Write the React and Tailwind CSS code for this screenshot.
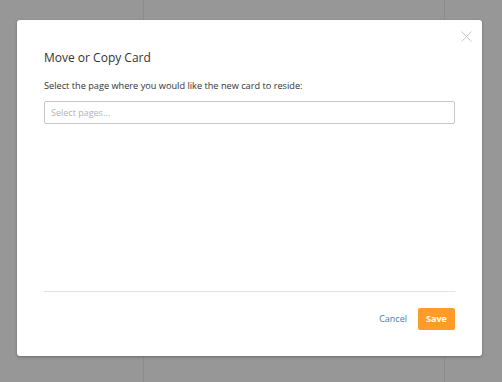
export default function App() {
  return (
    <div className="relative w-[502px] h-[382px] overflow-hidden bg-[#979797]" style={{ fontFamily: '"Open Sans", sans-serif' }}>
      <div className="absolute left-[143px] top-0 bottom-0 w-px bg-[#8c8c8c]" />
      <div className="absolute left-[444px] top-0 bottom-0 w-px bg-[#8c8c8c]" />
      <div className="absolute left-[17px] top-[20px] w-[465px] h-[336px] bg-white rounded-[3px] shadow-[0_1px_3px_rgba(0,0,0,0.3)] flex flex-col pl-[27px] pr-[27px]">
        <button className="absolute right-[10px] top-[11px] w-[11px] h-[11px] text-[#c8c8c8]">
          <svg width="11" height="11" viewBox="0 0 11 11" fill="none" stroke="currentColor" strokeWidth="1">
            <path d="M0.5 0.5 L10.5 10.5 M10.5 0.5 L0.5 10.5" />
          </svg>
        </button>
        <h2 className="mt-[29px] text-[12px] leading-[18px] text-[#333]">Move or Copy Card</h2>
        <p className="mt-[13px] text-[9.2px] leading-[12px] text-[#333]">Select the page where you would like the new card to reside:</p>
        <div className="mt-[9px] h-[23px] border border-[#c6c6c6] rounded-[2px] flex items-center px-[6px] text-[9px] text-[#b3b3b3]">Select pages...</div>
        <div className="flex-1" />
        <div className="h-px bg-[#e3e3e3]" />
        <div className="mt-[16px] mb-[26px] flex items-center justify-end gap-[11px]">
          <span className="text-[9px] text-[#4a7bab]">Cancel</span>
          <button className="h-[22px] w-[37px] rounded-[2px] bg-[#ff9c29] text-white text-[9px] font-bold">Save</button>
        </div>
      </div>
    </div>
  );
}
